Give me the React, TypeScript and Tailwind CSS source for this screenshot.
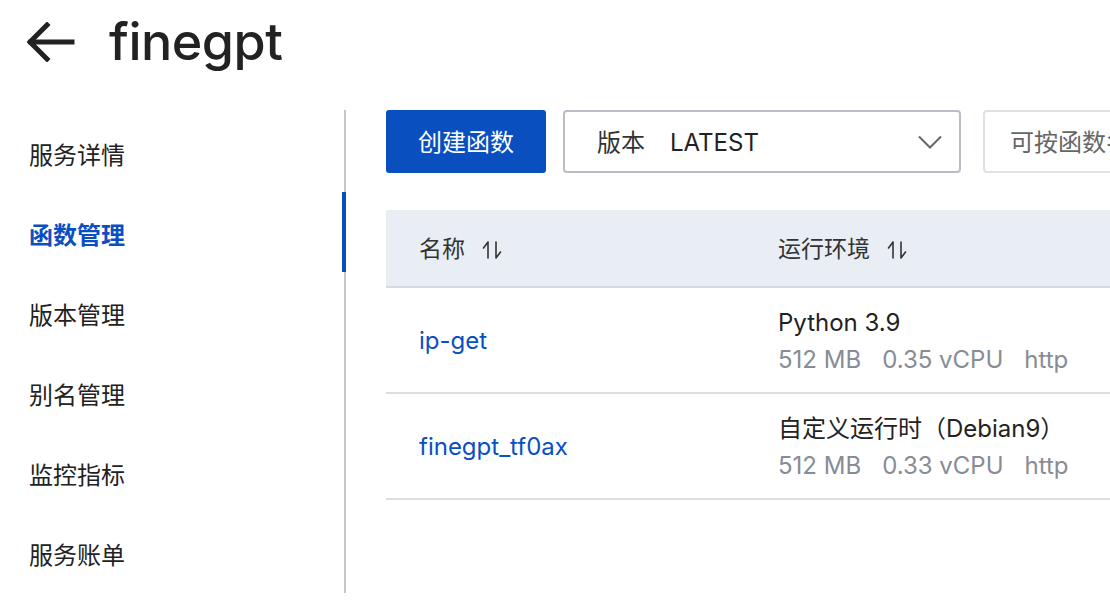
import React from "react";

const font = { fontFamily: '"Inter", "Noto Sans CJK SC", sans-serif' };

const SortIcon = () => (
  <svg width="20" height="20" viewBox="0 0 20 20" fill="none" stroke="#333" strokeWidth="1.6" strokeLinecap="round" className="ml-[17px]">
    <path d="M6 2v16M6 2L1.5 8" />
    <path d="M14 2v16M14 18l4.5-6" />
  </svg>
);

const navItems = ["服务详情", "函数管理", "版本管理", "别名管理", "监控指标", "服务账单"];

const rows = [
  { name: "ip-get", runtime: "Python 3.9", mem: "512 MB", cpu: "0.35 vCPU", trigger: "http" },
  { name: "finegpt_tf0ax", runtime: "自定义运行时（Debian9）", mem: "512 MB", cpu: "0.33 vCPU", trigger: "http" },
];

export default function App() {
  return (
    <div className="w-[1110px] h-[614px] overflow-hidden bg-white text-[#222]" style={font}>
      {/* header */}
      <div className="h-[110px] flex items-start pt-[14px]">
        <div className="flex items-center h-[56px]">
          <svg width="48" height="40" viewBox="0 0 48 40" fill="none" stroke="#222" strokeWidth="5" strokeLinecap="square" className="ml-[27px]">
            <path d="M4 20h41" />
            <path d="M20 3L3 20l17 17" />
          </svg>
          <h1 className="ml-[34px] text-[52px] leading-none font-medium tracking-[-0.5px]">finegpt</h1>
        </div>
      </div>

      <div className="flex">
        {/* sidebar */}
        <div className="w-[346px] shrink-0 h-[483px] border-r-2 border-[#c3c6cd] pt-[6px]">
          {navItems.map((item, i) => (
            <div key={item} className="relative h-[80px] flex items-center pl-[29px]">
              <span className={`text-[24px] ${i === 1 ? "text-[#0a4fc2] font-semibold" : "text-[#222]"}`}>{item}</span>
              {i === 1 && <div className="absolute right-[-2px] top-[-4px] w-[4px] h-[80px] bg-[#0a4fc2]" />}
            </div>
          ))}
        </div>

        {/* main */}
        <div className="flex-1 min-w-0 overflow-hidden pl-[40px]">
          <div className="flex items-center h-[63px]">
            <button className="w-[160px] h-[63px] pt-[3px] bg-[#0a4fc0] text-white text-[24px] rounded-[3px] shrink-0">创建函数</button>
            <div className="ml-[17px] w-[398px] h-[63px] pt-[3px] border-2 border-[#b9bdc5] rounded-[4px] flex items-center pl-[32px] pr-[17px] shrink-0">
              <span className="text-[24px] text-[#333]">版本</span>
              <span className="ml-[25px] text-[24px] text-[#222]">LATEST</span>
              <svg width="24" height="14" viewBox="0 0 24 14" fill="none" stroke="#666" strokeWidth="2" className="ml-auto mb-[2px]">
                <path d="M1 1.5l11 11 11-11" />
              </svg>
            </div>
            <div className="ml-[22px] w-[200px] h-[63px] pt-[3px] border-2 border-[#dfe1e6] border-r-0 rounded-l-[4px] flex items-center pl-[25px] shrink-0 overflow-hidden">
              <span className="text-[24px] text-[#666] whitespace-nowrap">可按函数名称</span>
            </div>
          </div>

          <div className="mt-[37px] w-[800px]">
            <div className="h-[78px] pt-[3px] bg-[#e9edf4] border-b-2 border-[#d6d9df] flex items-center">
              <div className="w-[359px] shrink-0 pl-[33px] flex items-center text-[23px] text-[#333]">
                名称
                <SortIcon />
              </div>
              <div className="pl-[33px] flex items-center text-[23px] text-[#333]">
                运行环境
                <SortIcon />
              </div>
            </div>
            {rows.map((r) => (
              <div key={r.name} className="h-[106px] pt-[2px] border-b-2 border-[#dcdee3] flex items-center">
                <div className="w-[359px] shrink-0 pl-[33px] text-[24px] text-[#0a4fc2]">{r.name}</div>
                <div className="pl-[33px]">
                  <div className="text-[24px] text-[#222] leading-[32px]">{r.runtime}</div>
                  <div className="mt-[5px] text-[24px] text-[#878c95] leading-[32px] flex gap-[21px]">
                    <span>{r.mem}</span>
                    <span>{r.cpu}</span>
                    <span>{r.trigger}</span>
                  </div>
                </div>
              </div>
            ))}
          </div>
        </div>
      </div>
    </div>
  );
}
